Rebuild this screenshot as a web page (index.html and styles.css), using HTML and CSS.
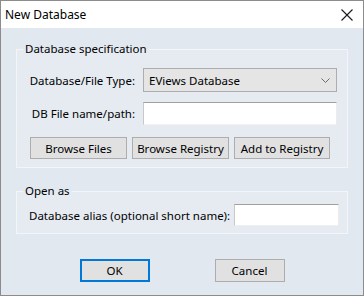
FILE: index.html
```html
<!DOCTYPE html>
<html>
<head>
<meta charset="utf-8">
<link rel="stylesheet" href="styles.css">
</head>
<body>
<div class="window">
  <div class="titlebar">
    <span class="title">New Database</span>
    <svg class="close" width="12" height="12" viewBox="0 0 12 12"><path d="M0.5 0.5 L11.5 11.5 M11.5 0.5 L0.5 11.5" stroke="#1a1a1a" stroke-width="1.1" fill="none"/></svg>
  </div>
  <div class="content">
    <fieldset class="group spec">
      <legend>Database specification</legend>
      <div class="form">
        <label class="lbl">Database/File Type:</label>
        <div class="select"><span>EViews Database</span><svg width="9" height="5" viewBox="0 0 9 5"><path d="M0.5 0.5 L4.5 4.5 L8.5 0.5" stroke="#6d6d6d" stroke-width="1" fill="none"/></svg></div>
        <label class="lbl">DB File name/path:</label>
        <div class="input path"></div>
      </div>
      <div class="btnrow">
        <button class="btn b1">Browse Files</button>
        <button class="btn b2">Browse Registry</button>
        <button class="btn b3">Add to Registry</button>
      </div>
    </fieldset>
    <fieldset class="group openas">
      <legend>Open as</legend>
      <div class="aliasrow">
        <label class="lbl">Database alias (optional short name):</label>
        <div class="input alias"></div>
      </div>
    </fieldset>
    <div class="actions">
      <button class="btn dlg default">OK</button>
      <button class="btn dlg">Cancel</button>
    </div>
  </div>
</div>
</body>
</html>
```

FILE: styles.css
```css
html, body {
  margin: 0;
  padding: 0;
}
body {
  font-family: "Noto Sans", "Open Sans", sans-serif;
  font-size: 11.5px;
  color: #000;
}
.window {
  width: 364px;
  height: 296px;
  box-sizing: border-box;
  border: 1px solid #8c8c8c;
  background: #e2e8f0;
  display: flex;
  flex-direction: column;
}
.titlebar {
  height: 27px;
  background: #fff;
  display: flex;
  align-items: center;
  justify-content: space-between;
  padding: 0 10px 0 4px;
}
.title {
  font-size: 12px;
  line-height: 16px;
}
.close {
  display: block;
  margin-top: 1px;
}
.content {
  padding: 13px 15px 0 15px;
  display: flex;
  flex-direction: column;
}
.group {
  margin: 0;
  padding: 0;
  border: 1px solid #f2f5f9;
  background: #e6ebf2;
  min-width: 0;
}
.group legend {
  margin-left: 6px;
  padding: 0 2px;
  line-height: 16px;
}
.form {
  display: grid;
  grid-template-columns: 118px 194px;
  column-gap: 8px;
  row-gap: 10px;
  align-items: center;
  margin-top: 11px;
}
.lbl {
  text-align: right;
  white-space: nowrap;
}
.select {
  height: 24px;
  box-sizing: border-box;
  border: 1px solid #adadad;
  background: #e5e5e5;
  display: flex;
  align-items: center;
  justify-content: space-between;
  padding: 0 6px 0 5px;
}
.select svg {
  display: block;
}
.input {
  background: #fff;
  box-sizing: border-box;
  border-top: 1px solid #a0a0a0;
  border-left: 1px solid #c8c8c8;
  border-right: 1px solid #ececec;
  border-bottom: 1px solid #f0f0f0;
}
.input.path {
  height: 23px;
}
.btnrow {
  display: flex;
  gap: 5px;
  margin: 12px 0 8px 13px;
}
.btn {
  font: inherit;
  color: #000;
  background: #e1e1e1;
  border: 1px solid #adadad;
  border-radius: 0;
  padding: 0;
  height: 22px;
  box-sizing: border-box;
}
.b1 { width: 97px; }
.b2 { width: 97px; }
.b3 { width: 96px; }
.openas {
  margin-top: 15px;
}
.aliasrow {
  display: flex;
  align-items: center;
  justify-content: space-between;
  margin: 5px 8px 7px 12px;
}
.aliasrow .lbl {
  text-align: left;
}
.input.alias {
  width: 105px;
  height: 22px;
}
.actions {
  display: flex;
  justify-content: center;
  gap: 65px;
  margin-top: 25px;
}
.btn.dlg {
  width: 70px;
  height: 23px;
}
.btn.default {
  border: 2px solid #0078d7;
}
```
